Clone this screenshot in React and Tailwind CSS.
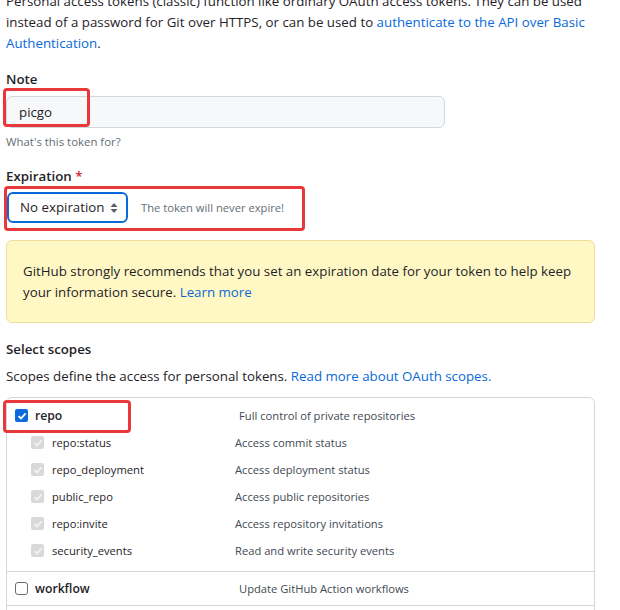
import React from "react";

function UpDown() {
  return (
    <svg width="8" height="12" viewBox="0 0 8 12" className="shrink-0">
      <path d="M4 1 L7.5 5 H0.5 Z" fill="#57606a" />
      <path d="M4 11 L7.5 7 H0.5 Z" fill="#57606a" />
    </svg>
  );
}

function Check({ state }) {
  if (state === "on") {
    return (
      <span className="w-[13px] h-[13px] rounded-[2px] bg-[#0b6bdc] flex items-center justify-center shrink-0">
        <svg width="10" height="10" viewBox="0 0 10 10">
          <path d="M1.6 5.2 L4 7.5 L8.6 2.4" stroke="white" strokeWidth="1.8" fill="none" />
        </svg>
      </span>
    );
  }
  if (state === "dis") {
    return (
      <span className="w-[13px] h-[13px] rounded-[2px] bg-[#d9d9d9] flex items-center justify-center shrink-0">
        <svg width="10" height="10" viewBox="0 0 10 10">
          <path d="M1.6 5.2 L4 7.5 L8.6 2.4" stroke="#f4f4f4" strokeWidth="1.8" fill="none" />
        </svg>
      </span>
    );
  }
  return <span className="w-[13px] h-[13px] rounded-[3px] border border-[#6e6e6e] bg-white shrink-0" />;
}

const subs = [
  ["repo:status", "Access commit status"],
  ["repo_deployment", "Access deployment status"],
  ["public_repo", "Access public repositories"],
  ["repo:invite", "Access repository invitations"],
  ["security_events", "Read and write security events"],
];

export default function App() {
  return (
    <div className="relative w-[620px] h-[610px] overflow-hidden bg-white text-[#1f2328] font-['Open_Sans',sans-serif] text-[13.3px] leading-[21px]">
      <div className="pl-[6px] w-[595px] mt-[-9px]">
        <p className="whitespace-nowrap">
          Personal access tokens (classic) function like ordinary OAuth access tokens. They can be used
          <br />
          instead of a password for Git over HTTPS, or can be used to{" "}
          <span className="text-[#0969da]">authenticate to the API over Basic</span>
          <br />
          <span className="text-[#0969da]">Authentication</span>.
        </p>

        <div className="mt-[15px] font-semibold">Note</div>
        <div className="mt-[6px] w-[439px] h-[32px] rounded-[6px] border border-[#d0d7de] bg-[#f6f8fa] flex items-center pl-[12px]">
          picgo
        </div>
        <div className="mt-[5px] text-[11.4px] leading-[18px] text-[#656d76]">What's this token for?</div>

        <div className="mt-[15px] font-semibold">
          Expiration <span className="text-[#cf222e]">*</span>
        </div>
        <div className="mt-[5px] flex items-center">
          <div className="ml-[1px] w-[121px] h-[31px] rounded-[6px] border-2 border-[#0969da] flex items-center justify-between pl-[11px] pr-[8px]">
            <span>No expiration</span>
            <UpDown />
          </div>
          <span className="ml-[13px] text-[11.2px] text-[#656d76]">The token will never expire!</span>
        </div>

        <div className="mt-[17px] h-[83px] rounded-[6px] border border-[#f0dc9a] bg-[#fff8c5] px-[16px] pt-[20px]">
          GitHub strongly recommends that you set an expiration date for your token to help keep
          <br />
          your information secure. <span className="text-[#0969da]">Learn more</span>
        </div>

        <div className="mt-[16px] font-semibold">Select scopes</div>
        <div className="mt-[6px]">
          Scopes define the access for personal tokens.{" "}
          <span className="text-[#0969da]">Read more about OAuth scopes.</span>
        </div>

        <div className="mt-[10px] border border-[#d0d7de] rounded-t-[6px] h-[230px]">
          <div className="pt-[4px] pb-[7px] border-b border-[#d0d7de]">
            <div className="h-[27px] flex items-center pl-[8px]">
              <Check state="on" />
              <span className="ml-[7px] w-[204px] text-[12.2px] font-semibold">repo</span>
              <span className="text-[11.2px] text-[#424a53]">Full control of private repositories</span>
            </div>
            {subs.map(([a, b]) => (
              <div key={a} className="h-[27px] flex items-center pl-[24px]">
                <Check state="dis" />
                <span className="ml-[8px] w-[183px] text-[11.2px]">{a}</span>
                <span className="text-[11.2px] text-[#424a53]">{b}</span>
              </div>
            ))}
          </div>
          <div className="h-[34px] flex items-center pl-[8px] border-b border-[#d0d7de]">
            <Check state="off" />
            <span className="ml-[7px] w-[204px] text-[12.2px] font-semibold">workflow</span>
            <span className="text-[11.2px] text-[#424a53]">Update GitHub Action workflows</span>
          </div>
        </div>
      </div>

      <div className="absolute left-[3px] top-[88px] w-[87px] h-[39px] rounded-[4px] border-[3px] border-[#e8383a]" />
      <div className="absolute left-[4px] top-[186px] w-[301px] h-[45px] rounded-[4px] border-[3px] border-[#e8383a]" />
      <div className="absolute left-[3px] top-[400px] w-[128px] h-[33px] rounded-[4px] border-[3px] border-[#e8383a]" />
    </div>
  );
}
